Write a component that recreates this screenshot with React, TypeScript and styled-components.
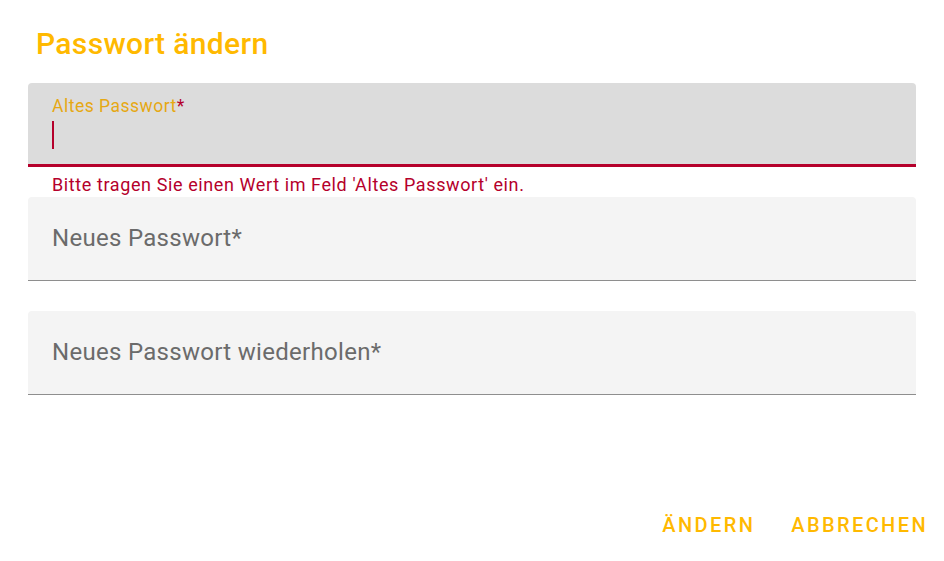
import React from "react";
import styled, { createGlobalStyle } from "styled-components";

const Colors = {
    amber: "#ffb900",
    amber_label: "#e6a813",
    red: "#b5002b",
    field: "#f4f4f4",
    field_focused: "#dcdcdc",
    label: "#6b6b6b",
    line: "#8e8e8e",
};

const GlobalStyle = createGlobalStyle`
    body {
        margin: 0;
        background: #ffffff;
        font-family: Roboto, "Liberation Sans", sans-serif;
    }
`;

// STYLED COMPONENTS

const Dialog = styled.div`
    width: 944px;
    height: 561px;
    display: flex;
    flex-direction: column;
    box-sizing: border-box;
    padding-top: 28px;
`;

const Title = styled.h2`
    margin: 0 0 23px;
    padding: 0 36px;
    font-size: 30px;
    line-height: 32px;
    font-weight: 500;
    letter-spacing: 0.35px;
    color: ${Colors.amber};
`;

const Content = styled.div`
    padding: 0 28px;
    display: flex;
    flex-direction: column;
`;

const FieldBox = styled.div<{ $focused?: boolean; $invalid?: boolean }>`
    height: 84px;
    box-sizing: border-box;
    background: ${(p) => (p.$focused ? Colors.field_focused : Colors.field)};
    border-radius: 4px 4px 0 0;
    border-bottom: ${(p) =>
        p.$invalid ? `3px solid ${Colors.red}` : `1px solid ${Colors.line}`};
    padding: 0 24px;
    display: flex;
    flex-direction: column;
    justify-content: ${(p) => (p.$focused ? "flex-start" : "center")};
`;

const FloatLabel = styled.div`
    margin-top: 12px;
    font-size: 17.5px;
    line-height: 22px;
    letter-spacing: 0.5px;
    color: ${Colors.amber_label};
`;

const Star = styled.span`
    color: ${Colors.red};
`;

const Caret = styled.div`
    margin-top: 4px;
    width: 2px;
    height: 28px;
    background: ${Colors.red};
`;

const Placeholder = styled.div`
    font-size: 24px;
    line-height: 28px;
    letter-spacing: 0.3px;
    color: ${Colors.label};
    margin-top: -2px;
`;

const Subscript = styled.div`
    height: 30px;
    padding: 10px 24px 0;
    box-sizing: border-box;
    font-size: 18px;
    line-height: 16px;
    letter-spacing: 0.6px;
    color: ${Colors.red};
`;

const Actions = styled.div`
    margin-top: auto;
    margin-bottom: 18px;
    display: flex;
    justify-content: flex-end;
    gap: 8px;
    padding-right: 2px;
`;

const TextButton = styled.button`
    background: none;
    border: none;
    height: 36px;
    padding: 0 14px;
    font-family: Roboto, "Liberation Sans", sans-serif;
    font-size: 20px;
    font-weight: 500;
    letter-spacing: 2.4px;
    text-transform: uppercase;
    color: ${Colors.amber};
    cursor: pointer;
`;

const App = () => {
    return (
        <Dialog>
            <GlobalStyle />
            <Title>Passwort ändern</Title>
            <Content>
                <FieldBox $focused $invalid>
                    <FloatLabel>
                        Altes Passwort<Star>*</Star>
                    </FloatLabel>
                    <Caret />
                </FieldBox>
                <Subscript>Bitte tragen Sie einen Wert im Feld 'Altes Passwort' ein.</Subscript>
                <FieldBox>
                    <Placeholder>Neues Passwort*</Placeholder>
                </FieldBox>
                <Subscript />
                <FieldBox>
                    <Placeholder>Neues Passwort wiederholen*</Placeholder>
                </FieldBox>
                <Subscript />
            </Content>
            <Actions>
                <TextButton>Ändern</TextButton>
                <TextButton>Abbrechen</TextButton>
            </Actions>
        </Dialog>
    );
};

export default App;
